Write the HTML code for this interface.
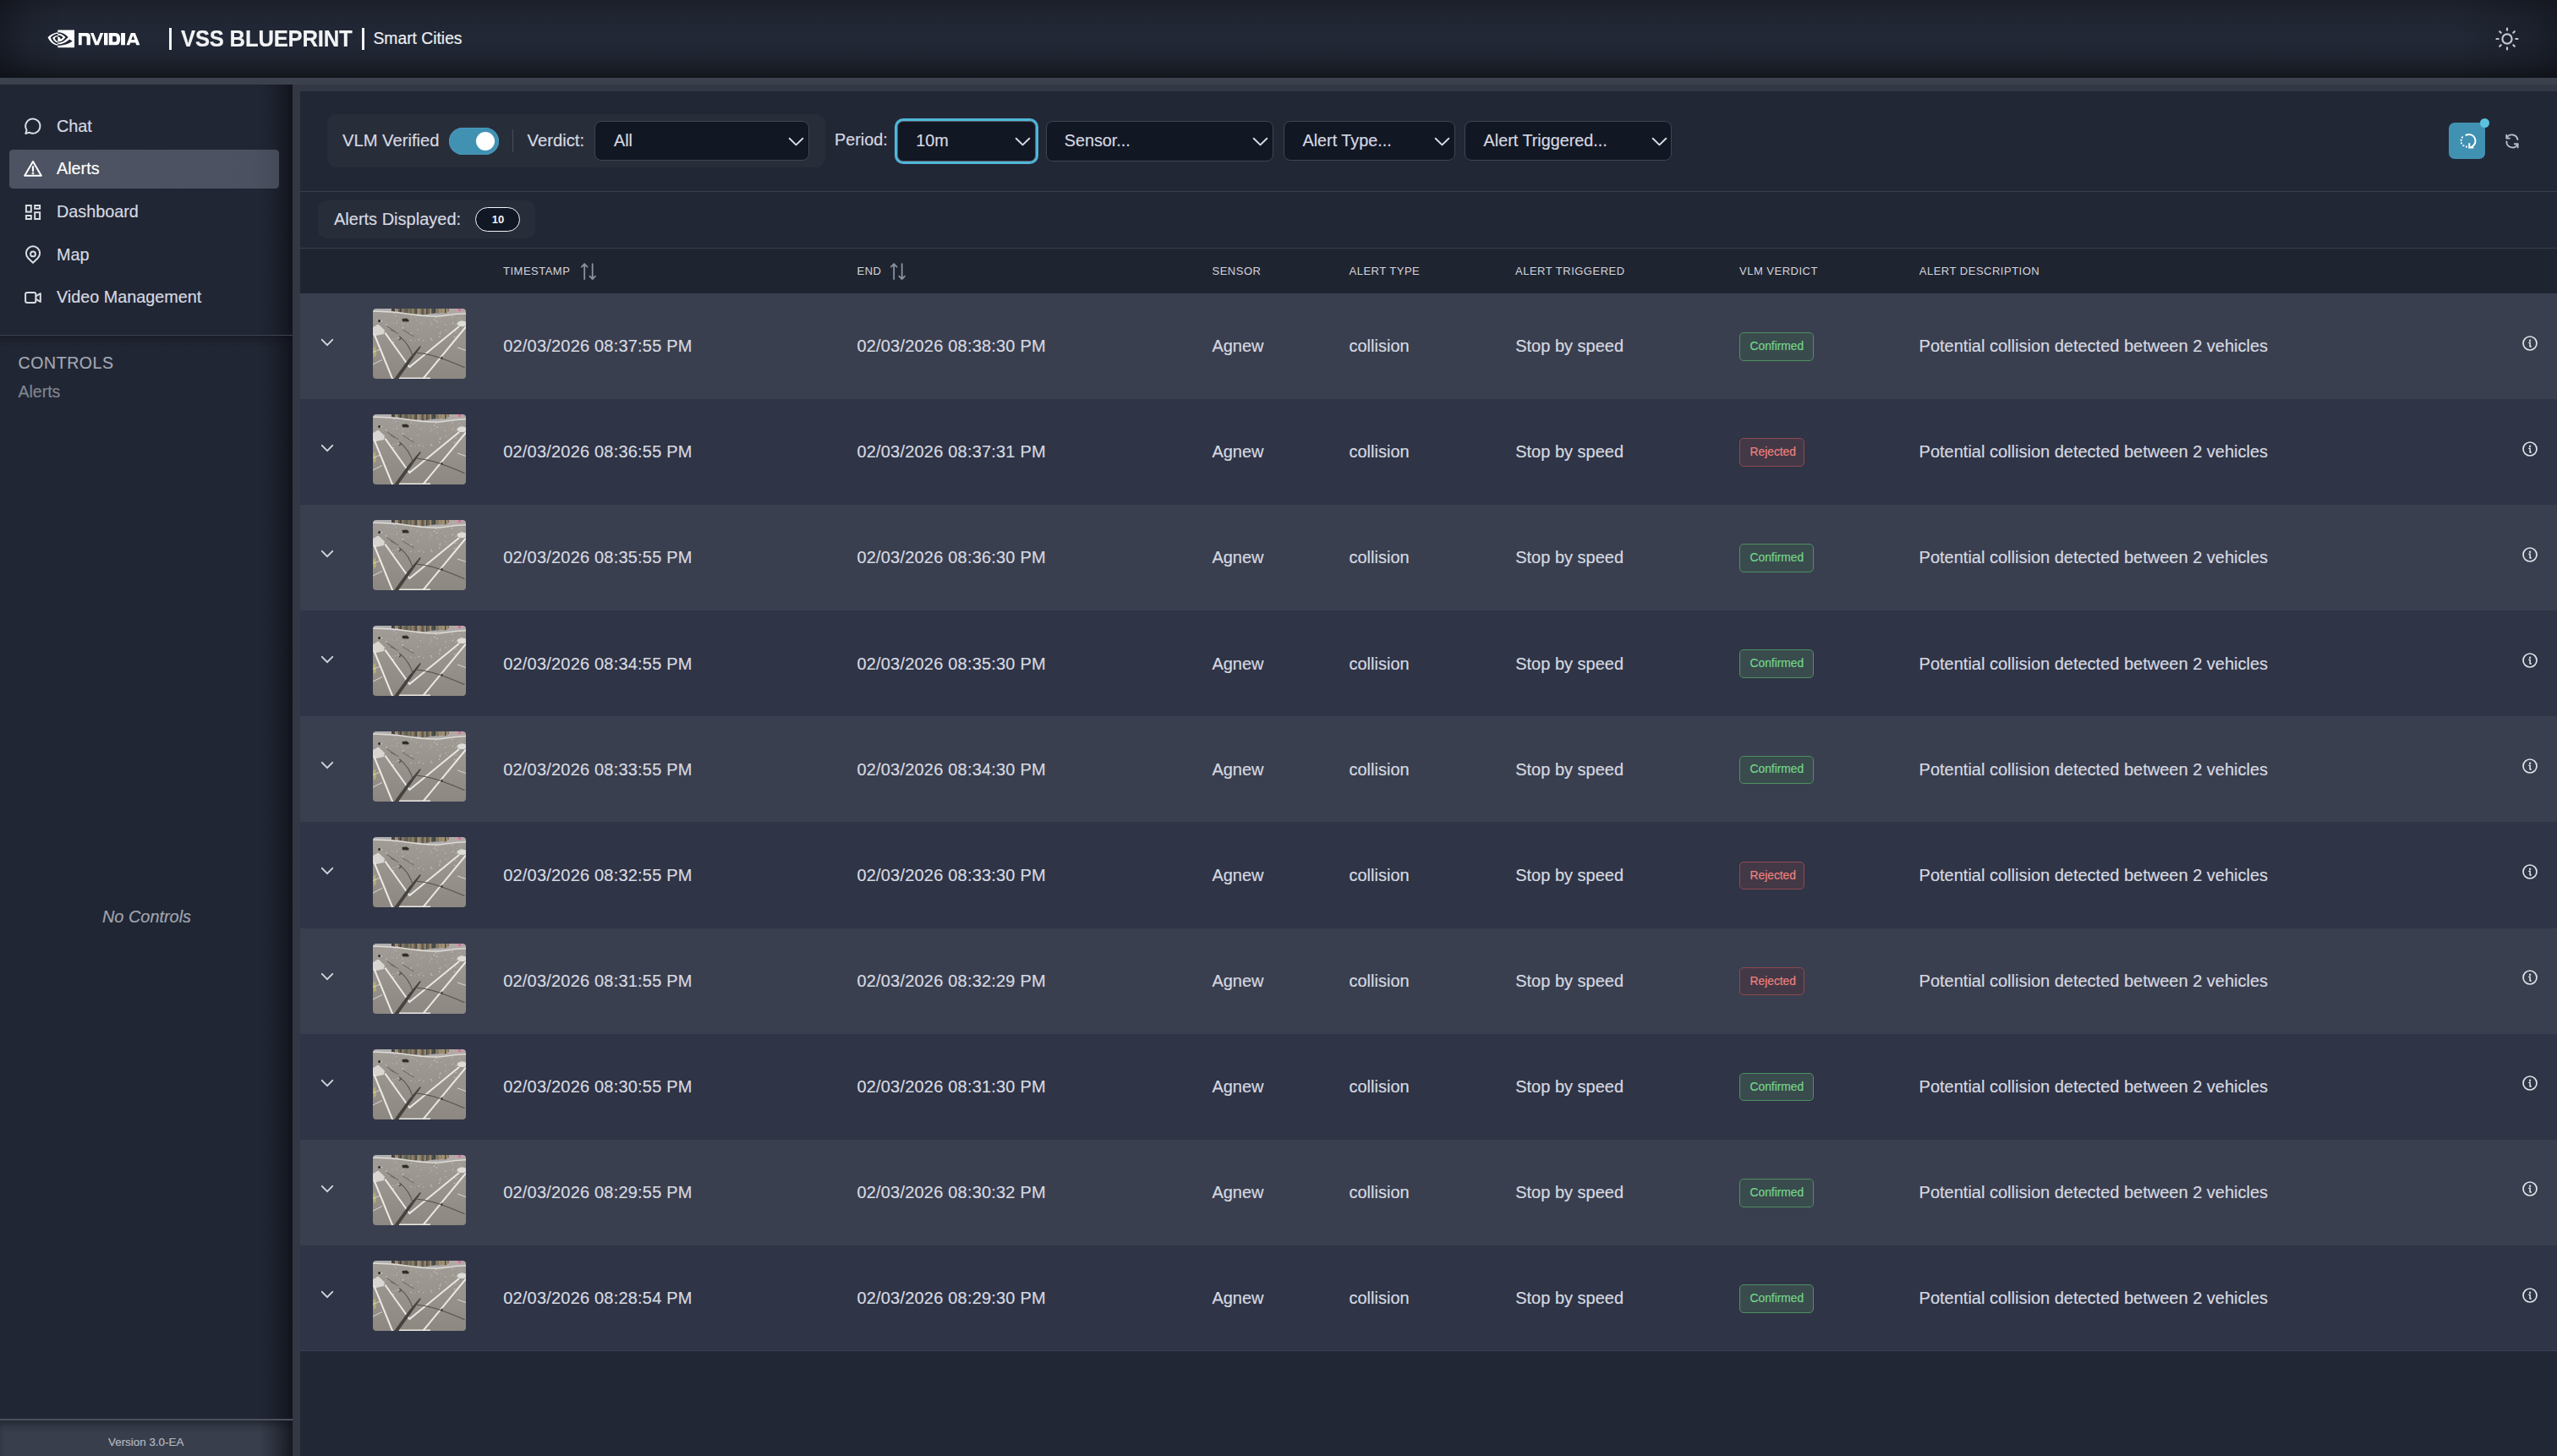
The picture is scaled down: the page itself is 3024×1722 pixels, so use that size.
<!DOCTYPE html>
<html><head><meta charset="utf-8">
<style>
*{box-sizing:border-box;margin:0;padding:0}
html,body{width:3024px;height:1722px;overflow:hidden;background:#222735;font-family:"Liberation Sans",sans-serif;color:#d4d7de}
.a{position:absolute;white-space:nowrap;line-height:1}
div.a,div.td{-webkit-text-stroke:0.18px currentColor}
#hdr{position:absolute;left:0;top:0;width:3024px;height:92px;background:linear-gradient(#1b1f29 0%,#202532 22%,#222836 50%,#1f2431 72%,#191d26 88%,#12151c 100%)}
#hdr:after{content:"";position:absolute;inset:0;background:linear-gradient(90deg,rgba(10,12,18,.45),rgba(10,12,18,.15) 1.2%,rgba(0,0,0,0) 2.5%,rgba(0,0,0,0) 96%,rgba(10,12,18,.25) 99%,rgba(10,12,18,.4))}
#strip{position:absolute;left:0;top:92px;width:3024px;height:8px;background:#3b414d}
#side{position:absolute;left:0;top:100px;width:346px;height:1622px;background:#212634;overflow:hidden}
#side:after{content:"";position:absolute;right:0;top:0;width:38px;height:100%;background:linear-gradient(90deg,rgba(14,16,22,0) 0%,rgba(14,16,22,.2) 35%,rgba(14,16,22,.5) 70%,rgba(14,16,22,.8) 100%)}
#gap{position:absolute;left:346px;top:100px;width:2678px;height:1622px;background:#333844}
#main{position:absolute;left:355px;top:108px;width:2669px;height:1614px;background:#222735}
.nav{font-size:19.8px;color:#d6d9e0}
.sel{position:absolute;background:#121724;border:1.5px solid #404551;border-radius:8px}
.sel span{position:absolute;font-size:20px;line-height:1;color:#d6d9e0;white-space:nowrap}
.chev{position:absolute;width:18px;height:10px}
.th{font-size:13px;letter-spacing:.5px;color:#d3d6dd;-webkit-text-stroke:0 !important}
.row{position:absolute;left:355px;width:2669px;height:125px}
.td{position:absolute;font-size:20px;line-height:1;white-space:nowrap;color:#d6d9e0}
.dt{letter-spacing:.2px}
</style></head><body>
<div id="hdr"></div>
<svg class="a" style="left:0;top:0" width="600" height="92" viewBox="0 0 600 92">
<g transform="translate(56.6,30.15) scale(1.31)" fill="#fff"><path d="M8.948 8.798v-1.43a6.7 6.7 0 0 1 .424-.018c3.922-.124 6.493 3.374 6.493 3.374s-2.774 3.851-5.75 3.851c-.398 0-.787-.062-1.158-.185v-4.346c1.528.185 1.837.857 2.747 2.385l2.04-1.714s-1.492-1.952-4-1.952a6.016 6.016 0 0 0-.796.035m0-4.735v2.138l.424-.027c5.45-.185 9.01 4.47 9.01 4.47s-4.08 4.964-8.33 4.964c-.37 0-.733-.035-1.095-.097v1.325c.3.035.61.062.91.062 3.957 0 6.82-2.023 9.593-4.408.459.371 2.34 1.263 2.73 1.652-2.633 2.208-8.772 3.984-12.253 3.984-.335 0-.653-.018-.971-.053v1.864H24V4.063zm0 10.326v1.131c-3.657-.654-4.673-4.46-4.673-4.46s1.758-1.944 4.673-2.262v1.237H8.94c-1.528-.186-2.73 1.245-2.73 1.245s.68 2.412 2.739 3.11M2.456 10.9s2.164-3.197 6.5-3.533V6.201C4.153 6.59 0 10.653 0 10.653s2.35 6.802 8.948 7.42v-1.237c-4.84-.6-6.492-5.936-6.492-5.936z"/></g>
<g fill="#fff" fill-rule="evenodd">
<path d="M92.9,53.3 V39 H102.5 Q106.8,39 106.8,43.3 V53.3 H102.6 V44.5 Q102.6,42.8 100.9,42.8 H96.7 V53.3 Z"/>
<path d="M107,39 H110.6 L114.6,49.4 L118.5,39 H122.3 L116.6,53.3 H112.4 Z"/>
<path d="M123,39 H127.4 V53.3 H123 Z"/>
<path d="M128.8,39 H136.6 Q142.2,39 142.2,46.15 Q142.2,53.3 136.6,53.3 H128.8 Z M133.1,42.8 H136.2 Q137.9,42.8 137.9,46.2 Q137.9,49.6 136.2,49.6 H133.1 Z"/>
<path d="M143.1,39 H148 V53.3 H143.1 Z"/>
<path d="M149.5,53.3 L154.8,39 H159.8 L165.4,53.3 H161.2 L160.3,50.6 H154.2 L153.3,53.3 Z M155.2,47 H159.3 L157.3,41.9 Z"/>
</g>
<rect x="200" y="33" width="3" height="26" fill="#f2f3f5"/>
<rect x="428" y="33" width="3" height="26" fill="#f2f3f5"/>
</svg>
<div class="a" style="left:214px;top:32.2px;font-size:27.4px;font-weight:bold;letter-spacing:-0.2px;color:#f2f3f5;transform:scaleX(0.935);transform-origin:0 0">VSS BLUEPRINT</div>
<div class="a" style="left:441.5px;top:35.9px;font-size:19.3px;color:#eceef1">Smart Cities</div>
<svg class="a" style="left:2951px;top:32px" width="28" height="28" viewBox="0 0 28 28" fill="none" stroke="#c3c7cf" stroke-width="2.2" stroke-linecap="round">
<circle cx="14" cy="14" r="5.6"/>
<path d="M14 1.5v2.2M14 24.3v2.2M1.5 14h2.2M24.3 14h2.2M5.2 5.2l1.5 1.5M21.3 21.3l1.5 1.5M5.2 22.8l1.5-1.5M21.3 6.7l1.5-1.5"/>
</svg>
<div id="strip"></div>
<div id="side"></div>
<div class="a" style="left:11px;top:177px;width:319px;height:46px;border-radius:4.5px;background:linear-gradient(90deg,#4d5362 0%,#4b5160 90%,#444a58 100%)"></div>
<svg class="a" style="left:0;top:100px" width="346" height="400" viewBox="0 100 346 400" fill="none" stroke="#d9dce2" stroke-width="2" stroke-linejoin="round" stroke-linecap="round">
<path d="M30.3 158 L31.6 153.8 A8.6 8.6 0 1 1 34.6 156.6 Z"/>
<path d="M39 191 L29.2 207.8 H48.8 Z" stroke="#fff"/>
<path d="M39 197.2 V202" stroke="#fff" stroke-width="2.2"/>
<circle cx="39" cy="205" r="0.4" fill="#fff" stroke="#fff" stroke-width="2"/>
<rect x="30.9" y="243" width="5.9" height="7.6" stroke-linejoin="miter"/>
<rect x="41.2" y="243" width="5.9" height="3.8" stroke-linejoin="miter"/>
<rect x="30.9" y="255" width="5.9" height="4" stroke-linejoin="miter"/>
<rect x="41.2" y="251.2" width="5.9" height="7.8" stroke-linejoin="miter"/>
<path d="M39 310.8 L33.3 305.2 A8.1 8.1 0 1 1 44.7 305.2 Z"/>
<circle cx="39" cy="300.4" r="2.9"/>
<rect x="30.1" y="346" width="12.3" height="12" rx="2.2"/>
<path d="M42.4 350.3 L47.8 347 V357 L42.4 353.7"/>
</svg>
<div class="a nav" style="left:67px;top:139.5px">Chat</div>
<div class="a nav" style="left:67px;top:190px;color:#fff">Alerts</div>
<div class="a nav" style="left:67px;top:240.5px">Dashboard</div>
<div class="a nav" style="left:67px;top:291.5px">Map</div>
<div class="a nav" style="left:67px;top:342px">Video Management</div>
<div class="a" style="left:0;top:395.5px;width:346px;height:1.5px;background:#3c4250"></div>
<div class="a" style="left:0;top:397px;width:346px;height:14px;background:linear-gradient(rgba(12,14,20,.35),rgba(12,14,20,0))"></div>
<div class="a" style="left:21.5px;top:419.5px;font-size:19.5px;letter-spacing:0.6px;color:#a3a8b3">CONTROLS</div>
<div class="a" style="left:21.5px;top:454px;font-size:19.5px;color:#80868f">Alerts</div>
<div class="a" style="left:121px;top:1074.5px;font-size:19.9px;font-style:italic;color:#a0a5b0">No Controls</div>
<div class="a" style="left:0;top:1677.5px;width:346px;height:2px;background:#4a505d"></div>
<div class="a" style="left:0;top:1679.5px;width:346px;height:42.5px;background:#383e4c;box-shadow:inset 0 8px 10px -4px rgba(15,18,25,.55)"></div>
<div class="a" style="left:306px;top:1679.5px;width:40px;height:42.5px;background:linear-gradient(90deg,rgba(14,16,22,0) 0%,rgba(14,16,22,.25) 40%,rgba(14,16,22,.55) 75%,rgba(14,16,22,.8) 100%)"></div>
<div class="a" style="left:128px;top:1698.9px;font-size:13.4px;color:#b4b9c3">Version 3.0-EA</div>
<div id="gap"></div>
<div id="main"></div>
<div class="a" style="left:387px;top:135.4px;width:588.6px;height:63px;border-radius:11px;background:#282d3a"></div>
<div class="a" style="left:405px;top:156px;font-size:20.2px;color:#d6d9e0">VLM Verified</div>
<div class="a" style="left:531px;top:151px;width:59px;height:32px;border-radius:16px;background:#4191b3;box-shadow:inset 0 0 0 1px #4899bd"></div>
<div class="a" style="left:563px;top:155.5px;width:22px;height:22px;border-radius:50%;background:#fff"></div>
<div class="a" style="left:606px;top:153px;width:1px;height:27px;background:#474d5a"></div>
<div class="a" style="left:623.5px;top:156px;font-size:20.3px;color:#d6d9e0">Verdict:</div>
<div class="sel" style="left:703.2px;top:143px;width:254.0px;height:47.099999999999994px"></div><div class="a" style="left:726px;top:156.5px;font-size:19.8px;color:#d6d9e0">All</div><svg class="a" style="left:931.6px;top:162px" width="19" height="11" viewBox="0 0 19 11"><path d="M1.7 1.8 L9.5 9.4 L17.3 1.8" fill="none" stroke="#d6d9e0" stroke-width="2" stroke-linecap="round" stroke-linejoin="round"/></svg>
<div class="a" style="left:987px;top:156px;font-size:19.8px;color:#d6d9e0">Period:</div>
<div class="sel" style="left:1061.3px;top:143px;width:164.0px;height:47.69999999999999px;box-shadow:0 0 0 3px #4fb6d9;border-color:#555b66;border-width:1px;border-radius:7px"></div><div class="a" style="left:1083.3px;top:156.5px;font-size:19.8px;color:#d6d9e0">10m</div><svg class="a" style="left:1200px;top:162px" width="19" height="11" viewBox="0 0 19 11"><path d="M1.7 1.8 L9.5 9.4 L17.3 1.8" fill="none" stroke="#d6d9e0" stroke-width="2" stroke-linecap="round" stroke-linejoin="round"/></svg>
<div class="sel" style="left:1236.5px;top:143.3px;width:269.5px;height:47.39999999999998px"></div><div class="a" style="left:1258.7px;top:156.5px;font-size:19.8px;color:#d6d9e0">Sensor...</div><svg class="a" style="left:1480.8px;top:162px" width="19" height="11" viewBox="0 0 19 11"><path d="M1.7 1.8 L9.5 9.4 L17.3 1.8" fill="none" stroke="#d6d9e0" stroke-width="2" stroke-linecap="round" stroke-linejoin="round"/></svg>
<div class="sel" style="left:1518.2px;top:143.2px;width:202.39999999999986px;height:47.30000000000001px"></div><div class="a" style="left:1540.5px;top:156.5px;font-size:19.8px;color:#d6d9e0">Alert Type...</div><svg class="a" style="left:1695.5px;top:162px" width="19" height="11" viewBox="0 0 19 11"><path d="M1.7 1.8 L9.5 9.4 L17.3 1.8" fill="none" stroke="#d6d9e0" stroke-width="2" stroke-linecap="round" stroke-linejoin="round"/></svg>
<div class="sel" style="left:1732.3px;top:143.2px;width:245.20000000000005px;height:47.30000000000001px"></div><div class="a" style="left:1754.6px;top:156.5px;font-size:19.8px;color:#d6d9e0">Alert Triggered...</div><svg class="a" style="left:1952.7px;top:162px" width="19" height="11" viewBox="0 0 19 11"><path d="M1.7 1.8 L9.5 9.4 L17.3 1.8" fill="none" stroke="#d6d9e0" stroke-width="2" stroke-linecap="round" stroke-linejoin="round"/></svg>
<div class="a" style="left:2896px;top:145px;width:43px;height:43px;border-radius:7px;background:#4191b3"></div>
<div class="a" style="left:2932.9px;top:139.7px;width:11.2px;height:11.2px;border-radius:50%;background:#5bc3de"></div>
<svg class="a" style="left:2906px;top:155px" width="24" height="24" viewBox="0 0 24 24" fill="none" stroke="#fff" stroke-width="2" stroke-linecap="round" stroke-linejoin="round">
<path d="M10.5 4.75 A7.3 7.3 0 0 1 17.2 18.6"/><path d="M14.3 14.2 V19.4 H19.4" stroke-linecap="butt" stroke-linejoin="miter"/>
<g fill="#fff" stroke="none"><rect x="5" y="6.5" width="1.9" height="1.9"/><rect x="3.7" y="9.8" width="1.9" height="1.9"/><rect x="4" y="13.4" width="1.9" height="1.9"/><rect x="6.5" y="16.3" width="1.9" height="1.9"/><rect x="10" y="17.6" width="1.9" height="1.9"/></g>
</svg>
<svg class="a" style="left:2961px;top:156.5px" width="20" height="20" viewBox="0 0 20 20" fill="none" stroke="#b9bdc6" stroke-width="1.9" stroke-linecap="round" stroke-linejoin="round">
<path d="M16.4 8 A6.8 6.8 0 0 0 3.6 6.2"/><path d="M3.3 2.6 V6.6 H7.1"/>
<path d="M3.4 10.4 A6.8 6.8 0 0 0 16.3 13.6"/><path d="M16.6 17.4 V13.3 H12.8"/>
</svg>
<div class="a" style="left:355px;top:225.8px;width:2669px;height:1px;background:#393e4b"></div>
<div class="a" style="left:376px;top:237.2px;width:257px;height:44.5px;border-radius:10px;background:#282d3a"></div>
<div class="a" style="left:395px;top:249px;font-size:20px;color:#d6d9e0">Alerts Displayed:</div>
<div class="a" style="left:562px;top:245px;width:53px;height:29px;border-radius:15px;background:#111725;border:1.5px solid #f4f5f7"></div>
<div class="a" style="left:581.8px;top:253.2px;font-size:13px;font-weight:bold;color:#f4f5f7;-webkit-text-stroke:0">10</div>
<div class="a" style="left:355px;top:293.1px;width:2669px;height:1px;background:#393e4b"></div>
<div class="a" style="left:355px;top:294px;width:2669px;height:52.6px;background:#1f2431"></div>
<div class="a th" style="left:595px;top:314.1px">TIMESTAMP</div>
<div class="a th" style="left:1013.5px;top:314.1px">END</div>
<div class="a th" style="left:1433.5px;top:314.1px">SENSOR</div>
<div class="a th" style="left:1595.5px;top:314.1px">ALERT TYPE</div>
<div class="a th" style="left:1792px;top:314.1px">ALERT TRIGGERED</div>
<div class="a th" style="left:2057px;top:314.1px">VLM VERDICT</div>
<div class="a th" style="left:2269.8px;top:314.1px">ALERT DESCRIPTION</div>
<svg class="a" style="left:687.4px;top:310px" width="20" height="22" viewBox="0 0 20 22" fill="none" stroke="#8b919d" stroke-width="1.8" stroke-linecap="round" stroke-linejoin="round"><path d="M4.2 20 V2.2 M0.9 5.6 L4.2 2.2 L7.5 5.6"/><path d="M13.7 2.2 V20 M10.4 16.6 L13.7 20 L17 16.6"/></svg>
<svg class="a" style="left:1053.4px;top:310px" width="20" height="22" viewBox="0 0 20 22" fill="none" stroke="#8b919d" stroke-width="1.8" stroke-linecap="round" stroke-linejoin="round"><path d="M4.2 20 V2.2 M0.9 5.6 L4.2 2.2 L7.5 5.6"/><path d="M13.7 2.2 V20 M10.4 16.6 L13.7 20 L17 16.6"/></svg>
<svg width="0" height="0" style="position:absolute"><defs>
<filter id="tb" x="-5%" y="-5%" width="110%" height="110%"><feGaussianBlur stdDeviation="0.3"/></filter>
<clipPath id="tc"><rect x="0" y="0" width="110" height="83" rx="4"/></clipPath>
<linearGradient id="tg" x1="0" y1="0" x2="0" y2="1"><stop offset="0" stop-color="#a29d97"/><stop offset="1" stop-color="#8c8781"/></linearGradient>
<symbol id="thumb" viewBox="0 0 110 83">
<g clip-path="url(#tc)"><g filter="url(#tb)">
<rect x="-2" y="-2" width="114" height="87" fill="url(#tg)"/>
<path d="M-2 -2 H112 V5 C100 4.5 92 7 78 8.3 C62 8.8 50 7 38 5 C26 3.6 12 3 -2 2.6 Z" fill="#b0aeb0"/>
<rect x="22.0" y="0" width="2.0" height="3.0" fill="#3f413d"/><rect x="24.0" y="0" width="2.0" height="3.9" fill="#4a4b45"/><rect x="26.0" y="0" width="1.5" height="3.7" fill="#a09070"/><rect x="27.6" y="0" width="2.6" height="3.3" fill="#8f8068"/><rect x="30.2" y="0" width="1.5" height="4.5" fill="#5b5548"/><rect x="31.6" y="0" width="2.3" height="4.5" fill="#3f413d"/><rect x="33.9" y="0" width="2.4" height="5.2" fill="#857660"/><rect x="36.3" y="0" width="2.3" height="5.9" fill="#6e6350"/><rect x="38.6" y="0" width="1.3" height="5.2" fill="#4a4b45"/><rect x="39.9" y="0" width="2.3" height="6.3" fill="#66655a"/><rect x="42.2" y="0" width="2.0" height="6.6" fill="#77775f"/><rect x="44.2" y="0" width="1.6" height="5.9" fill="#5b5548"/><rect x="45.8" y="0" width="2.4" height="6.3" fill="#8f8068"/><rect x="48.2" y="0" width="1.9" height="6.6" fill="#6e6350"/><rect x="50.1" y="0" width="2.5" height="6.3" fill="#4a4b45"/><rect x="52.6" y="0" width="2.1" height="6.0" fill="#a09070"/><rect x="54.7" y="0" width="2.6" height="6.6" fill="#8f8068"/><rect x="57.3" y="0" width="1.9" height="7.5" fill="#5b5548"/><rect x="59.2" y="0" width="1.6" height="7.5" fill="#5b5548"/><rect x="60.8" y="0" width="2.0" height="7.5" fill="#9a8870"/><rect x="62.8" y="0" width="2.0" height="6.8" fill="#4a4b45"/><rect x="64.8" y="0" width="2.6" height="6.3" fill="#6e6350"/><rect x="67.4" y="0" width="1.8" height="5.8" fill="#9a8870"/><rect x="69.2" y="0" width="2.6" height="5.8" fill="#4a4b45"/><rect x="71.7" y="0" width="2.5" height="5.4" fill="#3f413d"/><rect x="74.2" y="0" width="2.6" height="5.5" fill="#77775f"/><rect x="76.8" y="0" width="1.5" height="5.7" fill="#857660"/><rect x="78.4" y="0" width="2.0" height="5.4" fill="#9a8870"/><rect x="80.3" y="0" width="2.0" height="4.8" fill="#8f8068"/><rect x="82.3" y="0" width="2.8" height="5.8" fill="#a09070"/><rect x="85.0" y="0" width="1.7" height="5.2" fill="#4a4b45"/><rect x="86.8" y="0" width="1.5" height="5.1" fill="#a09070"/><rect x="88.3" y="0" width="2.4" height="3.4" fill="#857660"/>
<path d="M90 -2 H112 V5 C104 4.6 97 5.5 90 6.2 Z" fill="#b3a8a5"/>
<rect x="101" y="0" width="3" height="3" fill="#d2709a"/>
<rect x="24" y="5" width="2" height="1.5" fill="#b0a8d0"/>
<path d="M-2 3 C12 3.4 26 4 38 5.8 C50 7.8 62 9.3 78 9 C92 8 100 5.2 112 5.8" fill="none" stroke="#e2dfda" stroke-width="1.4" opacity=".95"/>
<circle cx="24.6" cy="17.3" r="0.43" fill="#e8e5e0" opacity="0.63"/><circle cx="9.8" cy="15.0" r="0.40" fill="#e8e5e0" opacity="0.77"/><circle cx="41.4" cy="19.5" r="0.49" fill="#e8e5e0" opacity="0.76"/><circle cx="93.9" cy="9.8" r="0.66" fill="#e8e5e0" opacity="0.87"/><circle cx="28.4" cy="16.9" r="0.68" fill="#e8e5e0" opacity="0.59"/><circle cx="102.7" cy="31.3" r="0.47" fill="#e8e5e0" opacity="0.55"/><circle cx="6.1" cy="23.2" r="0.58" fill="#e8e5e0" opacity="0.62"/><circle cx="89.3" cy="24.5" r="0.37" fill="#e8e5e0" opacity="0.82"/><circle cx="9.3" cy="14.7" r="0.64" fill="#e8e5e0" opacity="0.78"/><circle cx="31.7" cy="22.5" r="0.31" fill="#e8e5e0" opacity="0.62"/><circle cx="49.2" cy="10.1" r="0.45" fill="#e8e5e0" opacity="0.76"/><circle cx="15.9" cy="18.7" r="0.69" fill="#e8e5e0" opacity="0.80"/><circle cx="75.3" cy="21.1" r="0.31" fill="#e8e5e0" opacity="0.51"/><circle cx="98.5" cy="39.2" r="0.31" fill="#e8e5e0" opacity="0.79"/><circle cx="53.1" cy="25.0" r="0.70" fill="#e8e5e0" opacity="0.53"/><circle cx="59.9" cy="37.8" r="0.59" fill="#e8e5e0" opacity="0.82"/><circle cx="86.1" cy="25.7" r="0.57" fill="#e8e5e0" opacity="0.91"/><circle cx="94.3" cy="17.5" r="0.65" fill="#e8e5e0" opacity="0.76"/><circle cx="68.2" cy="15.0" r="0.54" fill="#e8e5e0" opacity="0.54"/><circle cx="69.8" cy="37.4" r="0.59" fill="#e8e5e0" opacity="0.67"/><circle cx="79.9" cy="27.7" r="0.64" fill="#e8e5e0" opacity="0.54"/><circle cx="81.5" cy="15.2" r="0.49" fill="#e8e5e0" opacity="0.60"/><circle cx="76.0" cy="15.4" r="0.67" fill="#e8e5e0" opacity="0.62"/><circle cx="3.2" cy="16.1" r="0.38" fill="#e8e5e0" opacity="0.58"/><circle cx="98.0" cy="27.7" r="0.66" fill="#e8e5e0" opacity="0.65"/><circle cx="72.6" cy="13.2" r="0.62" fill="#e8e5e0" opacity="0.91"/><circle cx="95.3" cy="15.0" r="0.43" fill="#e8e5e0" opacity="0.56"/><circle cx="54.6" cy="36.7" r="0.58" fill="#e8e5e0" opacity="0.93"/><circle cx="31.3" cy="13.4" r="0.41" fill="#e8e5e0" opacity="0.60"/><circle cx="45.9" cy="28.9" r="0.43" fill="#e8e5e0" opacity="0.88"/><circle cx="106.1" cy="8.9" r="0.31" fill="#e8e5e0" opacity="0.89"/><circle cx="6.4" cy="30.6" r="0.42" fill="#e8e5e0" opacity="0.86"/><circle cx="4.0" cy="13.5" r="0.31" fill="#e8e5e0" opacity="0.87"/><circle cx="27.2" cy="8.6" r="0.55" fill="#e8e5e0" opacity="0.70"/><circle cx="68.8" cy="35.8" r="0.68" fill="#e8e5e0" opacity="0.81"/><circle cx="23.1" cy="10.1" r="0.30" fill="#e8e5e0" opacity="0.71"/><circle cx="77.7" cy="11.3" r="0.44" fill="#e8e5e0" opacity="0.81"/><circle cx="57.2" cy="34.6" r="0.46" fill="#e8e5e0" opacity="0.86"/><circle cx="98.1" cy="19.2" r="0.59" fill="#e8e5e0" opacity="0.56"/><circle cx="50.1" cy="38.0" r="0.45" fill="#e8e5e0" opacity="0.76"/><circle cx="95.2" cy="38.8" r="0.49" fill="#e8e5e0" opacity="0.79"/><circle cx="23.7" cy="36.0" r="0.56" fill="#e8e5e0" opacity="0.82"/><circle cx="24.6" cy="39.6" r="0.69" fill="#e8e5e0" opacity="0.74"/><circle cx="85.8" cy="18.9" r="0.64" fill="#e8e5e0" opacity="0.66"/><circle cx="10.8" cy="14.6" r="0.61" fill="#e8e5e0" opacity="0.72"/><circle cx="5.0" cy="19.4" r="0.62" fill="#e8e5e0" opacity="0.58"/><circle cx="37.5" cy="21.1" r="0.36" fill="#e8e5e0" opacity="0.73"/><circle cx="78.7" cy="33.2" r="0.68" fill="#e8e5e0" opacity="0.72"/><circle cx="102.6" cy="10.7" r="0.51" fill="#e8e5e0" opacity="0.63"/><circle cx="79.3" cy="29.5" r="0.64" fill="#e8e5e0" opacity="0.75"/><circle cx="35.0" cy="18.1" r="0.66" fill="#e8e5e0" opacity="0.59"/><circle cx="92.2" cy="29.5" r="0.53" fill="#e8e5e0" opacity="0.59"/><circle cx="58.8" cy="15.3" r="0.31" fill="#e8e5e0" opacity="0.94"/><circle cx="56.7" cy="17.6" r="0.53" fill="#e8e5e0" opacity="0.72"/><circle cx="75.2" cy="14.5" r="0.47" fill="#e8e5e0" opacity="0.93"/><circle cx="99.9" cy="13.7" r="0.35" fill="#e8e5e0" opacity="0.70"/><circle cx="88.5" cy="28.5" r="0.43" fill="#e8e5e0" opacity="0.59"/><circle cx="67.5" cy="20.8" r="0.61" fill="#e8e5e0" opacity="0.51"/><circle cx="22.6" cy="16.2" r="0.43" fill="#e8e5e0" opacity="0.66"/><circle cx="67.7" cy="16.8" r="0.35" fill="#e8e5e0" opacity="0.73"/><circle cx="28.6" cy="14.4" r="0.47" fill="#e8e5e0" opacity="0.67"/><circle cx="45.8" cy="9.9" r="0.38" fill="#e8e5e0" opacity="0.78"/><circle cx="69.7" cy="18.2" r="0.54" fill="#e8e5e0" opacity="0.89"/><circle cx="26.7" cy="35.8" r="0.66" fill="#e8e5e0" opacity="0.64"/><circle cx="35.4" cy="22.8" r="0.70" fill="#e8e5e0" opacity="0.90"/><circle cx="16.2" cy="16.7" r="0.40" fill="#e8e5e0" opacity="0.54"/><circle cx="90.2" cy="17.5" r="0.35" fill="#e8e5e0" opacity="0.68"/><circle cx="74.6" cy="10.4" r="0.57" fill="#e8e5e0" opacity="0.91"/><circle cx="104.6" cy="14.1" r="0.60" fill="#e8e5e0" opacity="0.73"/><circle cx="74.7" cy="8.8" r="0.34" fill="#e8e5e0" opacity="0.52"/><circle cx="60.5" cy="14.8" r="0.36" fill="#e8e5e0" opacity="0.58"/><circle cx="23.6" cy="39.8" r="0.67" fill="#e8e5e0" opacity="0.54"/><circle cx="8.6" cy="28.2" r="0.61" fill="#e8e5e0" opacity="0.65"/><circle cx="51.5" cy="13.2" r="0.54" fill="#e8e5e0" opacity="0.51"/><circle cx="76.3" cy="22.0" r="0.48" fill="#e8e5e0" opacity="0.83"/><circle cx="45.0" cy="10.0" r="0.51" fill="#e8e5e0" opacity="0.51"/><circle cx="96.7" cy="33.5" r="0.64" fill="#e8e5e0" opacity="0.78"/><circle cx="44.9" cy="29.1" r="0.69" fill="#e8e5e0" opacity="0.86"/><circle cx="29.4" cy="34.4" r="0.61" fill="#e8e5e0" opacity="0.87"/><circle cx="45.0" cy="37.4" r="0.58" fill="#e8e5e0" opacity="0.85"/>
<path d="M0 22 L6.5 18.5 L14 25.5 L13 30 L4 32 L0 31 Z" fill="#d9d6d1"/>
<ellipse cx="105.5" cy="17.8" rx="6" ry="3.3" fill="#dedcd8"/>
<path d="M34.5 12 L40 11.6 L42.8 13.8 L42 15.6 L35 15.2 Z" fill="#2f2d2c"/>
<circle cx="7.6" cy="14.6" r="1.5" fill="#2f2d2c"/>
<path d="M0 47 L3 44 L4 55 L1 58 Z" fill="#c9c06a" opacity=".6"/>
<g fill="none" stroke="#ece9e3" stroke-linecap="butt">
<path d="M1.5 30 L23.5 84" stroke-width="2"/>
<path d="M14.4 28.6 L43.3 69 L102 21" stroke-width="1.9"/>
<path d="M58.4 84 L110 21.5" stroke-width="2"/>
<path d="M31 82.4 H68" stroke-width="1.8"/>
<path d="M0 66 L11 60.5" stroke-width="0.8"/>
<path d="M0 51.5 L9 48" stroke-width="0.7"/>
<path d="M100 46 L110 49.5" stroke-width="1.1" stroke="#d2cfca"/>
</g>
<path d="M24.5 84 L29.5 84 L45 62 L57 44.8 L55.5 44.2 L42 60 Z" fill="#45423f"/>
<g fill="none" stroke="#55514e" stroke-linecap="round">
<path d="M31.6 32.8 C39 39 45 47 47.2 57" stroke-width="1.1"/>
<path d="M50.8 52 C64 53 78 56.5 108 69.5" stroke-width="1.2"/>
<path d="M35.7 25.2 L48.1 32.8" stroke-width="1.3" stroke="#77726e"/>
<path d="M33.5 34.5 L31.5 36.8" stroke-width="1.3"/>
<path d="M17 21 L26 27" stroke-width=".9" stroke="#5e5a57"/>
<path d="M21 25 L30 29.5" stroke-width=".8" stroke="#5e5a57"/>
</g>
<ellipse cx="81.5" cy="58.2" rx="1" ry="1.8" fill="#3a3837"/>
</g></g>
</symbol></defs></svg>
<div class="a" style="left:355px;top:347px;width:2669px;height:1251px;background:#2f3446"></div>
<div class="a" style="left:355px;top:1597px;width:2669px;height:1px;background:#3b4051"></div>
<div class="a" style="left:355px;top:347.0px;width:2669px;height:125.1px;background:#3a3f4f"></div>
<svg class="a" style="left:378.5px;top:399.80px" width="16" height="11" viewBox="0 0 16 11"><path d="M1.8 1.8 L8 8.2 L14.2 1.8" fill="none" stroke="#d3d6dc" stroke-width="1.9" stroke-linecap="round" stroke-linejoin="round"/></svg>
<svg class="a" style="left:441px;top:364.90px" width="110" height="83"><use href="#thumb"/></svg>
<div class="td dt" style="left:595.2px;top:399.2px">02/03/2026 08:37:55 PM</div>
<div class="td dt" style="left:1013.4px;top:399.2px">02/03/2026 08:38:30 PM</div>
<div class="td" style="left:1433.4px;top:399.2px">Agnew</div>
<div class="td" style="left:1595.5px;top:399.2px">collision</div>
<div class="td" style="left:1792.2px;top:399.2px">Stop by speed</div>
<div class="a" style="left:2057.3px;top:393.10px;width:87.5px;height:33.7px;border-radius:5px;background:#3a4b4d;border:1.5px solid #4c9060"></div>
<div class="a" style="left:2069.5px;top:403.00px;font-size:13.8px;color:#74d68b">Confirmed</div>
<div class="td" style="left:2269.6px;top:399.2px">Potential collision detected between 2 vehicles</div>
<svg class="a" style="left:2981.6px;top:395.60px" width="20" height="20" viewBox="0 0 20 20" fill="none" stroke="#dfe2e8" stroke-width="1.7"><circle cx="10" cy="10" r="8"/><path d="M8.9 9.2 H10.1 V13.9 H11.2" stroke-width="1.6" stroke-linecap="round" stroke-linejoin="round"/><circle cx="10.1" cy="6.8" r="0.5" stroke-width="1.4"/></svg>
<svg class="a" style="left:378.5px;top:524.90px" width="16" height="11" viewBox="0 0 16 11"><path d="M1.8 1.8 L8 8.2 L14.2 1.8" fill="none" stroke="#d3d6dc" stroke-width="1.9" stroke-linecap="round" stroke-linejoin="round"/></svg>
<svg class="a" style="left:441px;top:490.00px" width="110" height="83"><use href="#thumb"/></svg>
<div class="td dt" style="left:595.2px;top:524.3px">02/03/2026 08:36:55 PM</div>
<div class="td dt" style="left:1013.4px;top:524.3px">02/03/2026 08:37:31 PM</div>
<div class="td" style="left:1433.4px;top:524.3px">Agnew</div>
<div class="td" style="left:1595.5px;top:524.3px">collision</div>
<div class="td" style="left:1792.2px;top:524.3px">Stop by speed</div>
<div class="a" style="left:2057.3px;top:518.20px;width:76.6px;height:33.7px;border-radius:5px;background:#433846;border:1.5px solid #8e4a50"></div>
<div class="a" style="left:2069.5px;top:528.10px;font-size:13.8px;color:#ef827e">Rejected</div>
<div class="td" style="left:2269.6px;top:524.3px">Potential collision detected between 2 vehicles</div>
<svg class="a" style="left:2981.6px;top:520.70px" width="20" height="20" viewBox="0 0 20 20" fill="none" stroke="#dfe2e8" stroke-width="1.7"><circle cx="10" cy="10" r="8"/><path d="M8.9 9.2 H10.1 V13.9 H11.2" stroke-width="1.6" stroke-linecap="round" stroke-linejoin="round"/><circle cx="10.1" cy="6.8" r="0.5" stroke-width="1.4"/></svg>
<div class="a" style="left:355px;top:597.2px;width:2669px;height:125.1px;background:#3a3f4f"></div>
<svg class="a" style="left:378.5px;top:650.00px" width="16" height="11" viewBox="0 0 16 11"><path d="M1.8 1.8 L8 8.2 L14.2 1.8" fill="none" stroke="#d3d6dc" stroke-width="1.9" stroke-linecap="round" stroke-linejoin="round"/></svg>
<svg class="a" style="left:441px;top:615.10px" width="110" height="83"><use href="#thumb"/></svg>
<div class="td dt" style="left:595.2px;top:649.4px">02/03/2026 08:35:55 PM</div>
<div class="td dt" style="left:1013.4px;top:649.4px">02/03/2026 08:36:30 PM</div>
<div class="td" style="left:1433.4px;top:649.4px">Agnew</div>
<div class="td" style="left:1595.5px;top:649.4px">collision</div>
<div class="td" style="left:1792.2px;top:649.4px">Stop by speed</div>
<div class="a" style="left:2057.3px;top:643.30px;width:87.5px;height:33.7px;border-radius:5px;background:#3a4b4d;border:1.5px solid #4c9060"></div>
<div class="a" style="left:2069.5px;top:653.20px;font-size:13.8px;color:#74d68b">Confirmed</div>
<div class="td" style="left:2269.6px;top:649.4px">Potential collision detected between 2 vehicles</div>
<svg class="a" style="left:2981.6px;top:645.80px" width="20" height="20" viewBox="0 0 20 20" fill="none" stroke="#dfe2e8" stroke-width="1.7"><circle cx="10" cy="10" r="8"/><path d="M8.9 9.2 H10.1 V13.9 H11.2" stroke-width="1.6" stroke-linecap="round" stroke-linejoin="round"/><circle cx="10.1" cy="6.8" r="0.5" stroke-width="1.4"/></svg>
<svg class="a" style="left:378.5px;top:775.10px" width="16" height="11" viewBox="0 0 16 11"><path d="M1.8 1.8 L8 8.2 L14.2 1.8" fill="none" stroke="#d3d6dc" stroke-width="1.9" stroke-linecap="round" stroke-linejoin="round"/></svg>
<svg class="a" style="left:441px;top:740.20px" width="110" height="83"><use href="#thumb"/></svg>
<div class="td dt" style="left:595.2px;top:774.5px">02/03/2026 08:34:55 PM</div>
<div class="td dt" style="left:1013.4px;top:774.5px">02/03/2026 08:35:30 PM</div>
<div class="td" style="left:1433.4px;top:774.5px">Agnew</div>
<div class="td" style="left:1595.5px;top:774.5px">collision</div>
<div class="td" style="left:1792.2px;top:774.5px">Stop by speed</div>
<div class="a" style="left:2057.3px;top:768.40px;width:87.5px;height:33.7px;border-radius:5px;background:#3a4b4d;border:1.5px solid #4c9060"></div>
<div class="a" style="left:2069.5px;top:778.30px;font-size:13.8px;color:#74d68b">Confirmed</div>
<div class="td" style="left:2269.6px;top:774.5px">Potential collision detected between 2 vehicles</div>
<svg class="a" style="left:2981.6px;top:770.90px" width="20" height="20" viewBox="0 0 20 20" fill="none" stroke="#dfe2e8" stroke-width="1.7"><circle cx="10" cy="10" r="8"/><path d="M8.9 9.2 H10.1 V13.9 H11.2" stroke-width="1.6" stroke-linecap="round" stroke-linejoin="round"/><circle cx="10.1" cy="6.8" r="0.5" stroke-width="1.4"/></svg>
<div class="a" style="left:355px;top:847.4px;width:2669px;height:125.1px;background:#3a3f4f"></div>
<svg class="a" style="left:378.5px;top:900.20px" width="16" height="11" viewBox="0 0 16 11"><path d="M1.8 1.8 L8 8.2 L14.2 1.8" fill="none" stroke="#d3d6dc" stroke-width="1.9" stroke-linecap="round" stroke-linejoin="round"/></svg>
<svg class="a" style="left:441px;top:865.30px" width="110" height="83"><use href="#thumb"/></svg>
<div class="td dt" style="left:595.2px;top:899.6px">02/03/2026 08:33:55 PM</div>
<div class="td dt" style="left:1013.4px;top:899.6px">02/03/2026 08:34:30 PM</div>
<div class="td" style="left:1433.4px;top:899.6px">Agnew</div>
<div class="td" style="left:1595.5px;top:899.6px">collision</div>
<div class="td" style="left:1792.2px;top:899.6px">Stop by speed</div>
<div class="a" style="left:2057.3px;top:893.50px;width:87.5px;height:33.7px;border-radius:5px;background:#3a4b4d;border:1.5px solid #4c9060"></div>
<div class="a" style="left:2069.5px;top:903.40px;font-size:13.8px;color:#74d68b">Confirmed</div>
<div class="td" style="left:2269.6px;top:899.6px">Potential collision detected between 2 vehicles</div>
<svg class="a" style="left:2981.6px;top:896.00px" width="20" height="20" viewBox="0 0 20 20" fill="none" stroke="#dfe2e8" stroke-width="1.7"><circle cx="10" cy="10" r="8"/><path d="M8.9 9.2 H10.1 V13.9 H11.2" stroke-width="1.6" stroke-linecap="round" stroke-linejoin="round"/><circle cx="10.1" cy="6.8" r="0.5" stroke-width="1.4"/></svg>
<svg class="a" style="left:378.5px;top:1025.30px" width="16" height="11" viewBox="0 0 16 11"><path d="M1.8 1.8 L8 8.2 L14.2 1.8" fill="none" stroke="#d3d6dc" stroke-width="1.9" stroke-linecap="round" stroke-linejoin="round"/></svg>
<svg class="a" style="left:441px;top:990.40px" width="110" height="83"><use href="#thumb"/></svg>
<div class="td dt" style="left:595.2px;top:1024.7px">02/03/2026 08:32:55 PM</div>
<div class="td dt" style="left:1013.4px;top:1024.7px">02/03/2026 08:33:30 PM</div>
<div class="td" style="left:1433.4px;top:1024.7px">Agnew</div>
<div class="td" style="left:1595.5px;top:1024.7px">collision</div>
<div class="td" style="left:1792.2px;top:1024.7px">Stop by speed</div>
<div class="a" style="left:2057.3px;top:1018.60px;width:76.6px;height:33.7px;border-radius:5px;background:#433846;border:1.5px solid #8e4a50"></div>
<div class="a" style="left:2069.5px;top:1028.50px;font-size:13.8px;color:#ef827e">Rejected</div>
<div class="td" style="left:2269.6px;top:1024.7px">Potential collision detected between 2 vehicles</div>
<svg class="a" style="left:2981.6px;top:1021.10px" width="20" height="20" viewBox="0 0 20 20" fill="none" stroke="#dfe2e8" stroke-width="1.7"><circle cx="10" cy="10" r="8"/><path d="M8.9 9.2 H10.1 V13.9 H11.2" stroke-width="1.6" stroke-linecap="round" stroke-linejoin="round"/><circle cx="10.1" cy="6.8" r="0.5" stroke-width="1.4"/></svg>
<div class="a" style="left:355px;top:1097.6px;width:2669px;height:125.1px;background:#3a3f4f"></div>
<svg class="a" style="left:378.5px;top:1150.40px" width="16" height="11" viewBox="0 0 16 11"><path d="M1.8 1.8 L8 8.2 L14.2 1.8" fill="none" stroke="#d3d6dc" stroke-width="1.9" stroke-linecap="round" stroke-linejoin="round"/></svg>
<svg class="a" style="left:441px;top:1115.50px" width="110" height="83"><use href="#thumb"/></svg>
<div class="td dt" style="left:595.2px;top:1149.8px">02/03/2026 08:31:55 PM</div>
<div class="td dt" style="left:1013.4px;top:1149.8px">02/03/2026 08:32:29 PM</div>
<div class="td" style="left:1433.4px;top:1149.8px">Agnew</div>
<div class="td" style="left:1595.5px;top:1149.8px">collision</div>
<div class="td" style="left:1792.2px;top:1149.8px">Stop by speed</div>
<div class="a" style="left:2057.3px;top:1143.70px;width:76.6px;height:33.7px;border-radius:5px;background:#433846;border:1.5px solid #8e4a50"></div>
<div class="a" style="left:2069.5px;top:1153.60px;font-size:13.8px;color:#ef827e">Rejected</div>
<div class="td" style="left:2269.6px;top:1149.8px">Potential collision detected between 2 vehicles</div>
<svg class="a" style="left:2981.6px;top:1146.20px" width="20" height="20" viewBox="0 0 20 20" fill="none" stroke="#dfe2e8" stroke-width="1.7"><circle cx="10" cy="10" r="8"/><path d="M8.9 9.2 H10.1 V13.9 H11.2" stroke-width="1.6" stroke-linecap="round" stroke-linejoin="round"/><circle cx="10.1" cy="6.8" r="0.5" stroke-width="1.4"/></svg>
<svg class="a" style="left:378.5px;top:1275.50px" width="16" height="11" viewBox="0 0 16 11"><path d="M1.8 1.8 L8 8.2 L14.2 1.8" fill="none" stroke="#d3d6dc" stroke-width="1.9" stroke-linecap="round" stroke-linejoin="round"/></svg>
<svg class="a" style="left:441px;top:1240.60px" width="110" height="83"><use href="#thumb"/></svg>
<div class="td dt" style="left:595.2px;top:1274.9px">02/03/2026 08:30:55 PM</div>
<div class="td dt" style="left:1013.4px;top:1274.9px">02/03/2026 08:31:30 PM</div>
<div class="td" style="left:1433.4px;top:1274.9px">Agnew</div>
<div class="td" style="left:1595.5px;top:1274.9px">collision</div>
<div class="td" style="left:1792.2px;top:1274.9px">Stop by speed</div>
<div class="a" style="left:2057.3px;top:1268.80px;width:87.5px;height:33.7px;border-radius:5px;background:#3a4b4d;border:1.5px solid #4c9060"></div>
<div class="a" style="left:2069.5px;top:1278.70px;font-size:13.8px;color:#74d68b">Confirmed</div>
<div class="td" style="left:2269.6px;top:1274.9px">Potential collision detected between 2 vehicles</div>
<svg class="a" style="left:2981.6px;top:1271.30px" width="20" height="20" viewBox="0 0 20 20" fill="none" stroke="#dfe2e8" stroke-width="1.7"><circle cx="10" cy="10" r="8"/><path d="M8.9 9.2 H10.1 V13.9 H11.2" stroke-width="1.6" stroke-linecap="round" stroke-linejoin="round"/><circle cx="10.1" cy="6.8" r="0.5" stroke-width="1.4"/></svg>
<div class="a" style="left:355px;top:1347.8px;width:2669px;height:125.1px;background:#3a3f4f"></div>
<svg class="a" style="left:378.5px;top:1400.60px" width="16" height="11" viewBox="0 0 16 11"><path d="M1.8 1.8 L8 8.2 L14.2 1.8" fill="none" stroke="#d3d6dc" stroke-width="1.9" stroke-linecap="round" stroke-linejoin="round"/></svg>
<svg class="a" style="left:441px;top:1365.70px" width="110" height="83"><use href="#thumb"/></svg>
<div class="td dt" style="left:595.2px;top:1400.0px">02/03/2026 08:29:55 PM</div>
<div class="td dt" style="left:1013.4px;top:1400.0px">02/03/2026 08:30:32 PM</div>
<div class="td" style="left:1433.4px;top:1400.0px">Agnew</div>
<div class="td" style="left:1595.5px;top:1400.0px">collision</div>
<div class="td" style="left:1792.2px;top:1400.0px">Stop by speed</div>
<div class="a" style="left:2057.3px;top:1393.90px;width:87.5px;height:33.7px;border-radius:5px;background:#3a4b4d;border:1.5px solid #4c9060"></div>
<div class="a" style="left:2069.5px;top:1403.80px;font-size:13.8px;color:#74d68b">Confirmed</div>
<div class="td" style="left:2269.6px;top:1400.0px">Potential collision detected between 2 vehicles</div>
<svg class="a" style="left:2981.6px;top:1396.40px" width="20" height="20" viewBox="0 0 20 20" fill="none" stroke="#dfe2e8" stroke-width="1.7"><circle cx="10" cy="10" r="8"/><path d="M8.9 9.2 H10.1 V13.9 H11.2" stroke-width="1.6" stroke-linecap="round" stroke-linejoin="round"/><circle cx="10.1" cy="6.8" r="0.5" stroke-width="1.4"/></svg>
<svg class="a" style="left:378.5px;top:1525.70px" width="16" height="11" viewBox="0 0 16 11"><path d="M1.8 1.8 L8 8.2 L14.2 1.8" fill="none" stroke="#d3d6dc" stroke-width="1.9" stroke-linecap="round" stroke-linejoin="round"/></svg>
<svg class="a" style="left:441px;top:1490.80px" width="110" height="83"><use href="#thumb"/></svg>
<div class="td dt" style="left:595.2px;top:1525.1px">02/03/2026 08:28:54 PM</div>
<div class="td dt" style="left:1013.4px;top:1525.1px">02/03/2026 08:29:30 PM</div>
<div class="td" style="left:1433.4px;top:1525.1px">Agnew</div>
<div class="td" style="left:1595.5px;top:1525.1px">collision</div>
<div class="td" style="left:1792.2px;top:1525.1px">Stop by speed</div>
<div class="a" style="left:2057.3px;top:1519.00px;width:87.5px;height:33.7px;border-radius:5px;background:#3a4b4d;border:1.5px solid #4c9060"></div>
<div class="a" style="left:2069.5px;top:1528.90px;font-size:13.8px;color:#74d68b">Confirmed</div>
<div class="td" style="left:2269.6px;top:1525.1px">Potential collision detected between 2 vehicles</div>
<svg class="a" style="left:2981.6px;top:1521.50px" width="20" height="20" viewBox="0 0 20 20" fill="none" stroke="#dfe2e8" stroke-width="1.7"><circle cx="10" cy="10" r="8"/><path d="M8.9 9.2 H10.1 V13.9 H11.2" stroke-width="1.6" stroke-linecap="round" stroke-linejoin="round"/><circle cx="10.1" cy="6.8" r="0.5" stroke-width="1.4"/></svg>
</body></html>
